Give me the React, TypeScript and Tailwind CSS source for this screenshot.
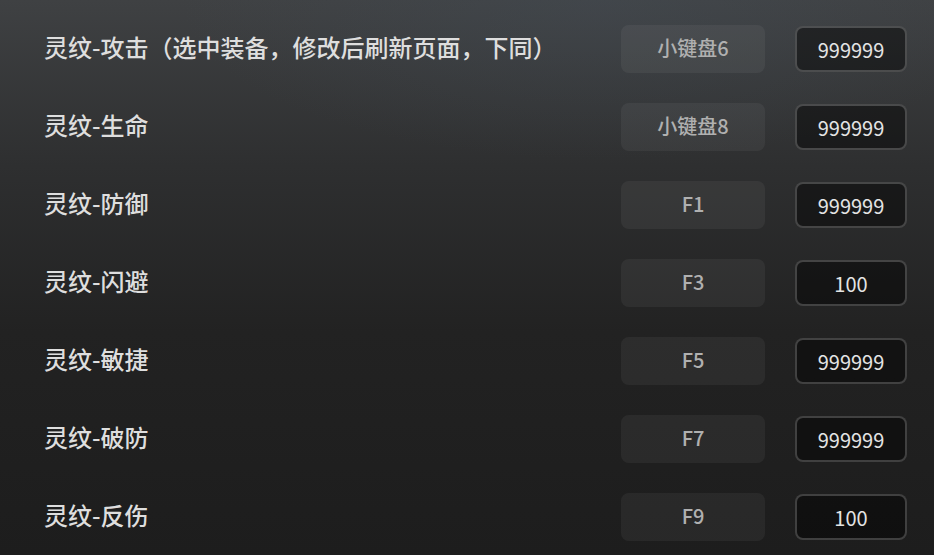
import React, { useState } from 'react';

interface Row {
  label: string;
  hotkey: string;
  value: string;
}

const rows: Row[] = [
  { label: '灵纹-攻击（选中装备，修改后刷新页面，下同）', hotkey: '小键盘6', value: '999999' },
  { label: '灵纹-生命', hotkey: '小键盘8', value: '999999' },
  { label: '灵纹-防御', hotkey: 'F1', value: '999999' },
  { label: '灵纹-闪避', hotkey: 'F3', value: '100' },
  { label: '灵纹-敏捷', hotkey: 'F5', value: '999999' },
  { label: '灵纹-破防', hotkey: 'F7', value: '999999' },
  { label: '灵纹-反伤', hotkey: 'F9', value: '100' },
];

const App: React.FC = () => {
  const [values, setValues] = useState(rows.map(r => r.value));

  return (
    <div
      className="relative w-[934px] h-[555px] overflow-hidden bg-[linear-gradient(180deg,#3f4143_0%,#2e2f30_30%,#222222_60%,#1d1d1d_100%)]"
      style={{ fontFamily: '"Noto Sans CJK SC", "Noto Sans", sans-serif' }}
    >
      <div className="pointer-events-none absolute inset-0 bg-[radial-gradient(ellipse_420px_160px_at_600px_0px,rgba(70,80,90,0.35),transparent)]" />
      <div className="relative flex flex-col gap-[30px] pt-[25px] pl-[44px] pr-[27px]">
        {rows.map((r, i) => (
          <div key={i} className="flex items-center h-[48px]">
            <span className="flex-1 pb-[5px] text-[24px] font-medium text-[#dedede] leading-none">{r.label}</span>
            <button className="w-[144px] h-[48px] pb-[2px] rounded-lg bg-white/5 text-[20px] font-medium text-[#b0b0b0] leading-none">
              {r.hotkey}
            </button>
            <input
              value={values[i]}
              onChange={e => setValues(values.map((v, j) => (j === i ? e.target.value : v)))}
              className="ml-[30px] w-[112px] h-[46px] pt-[1px] rounded-lg border-2 border-white/20 bg-black/45 text-center text-[20px] text-[#e4e4e4] outline-none"
            />
          </div>
        ))}
      </div>
    </div>
  );
};

export default App;
